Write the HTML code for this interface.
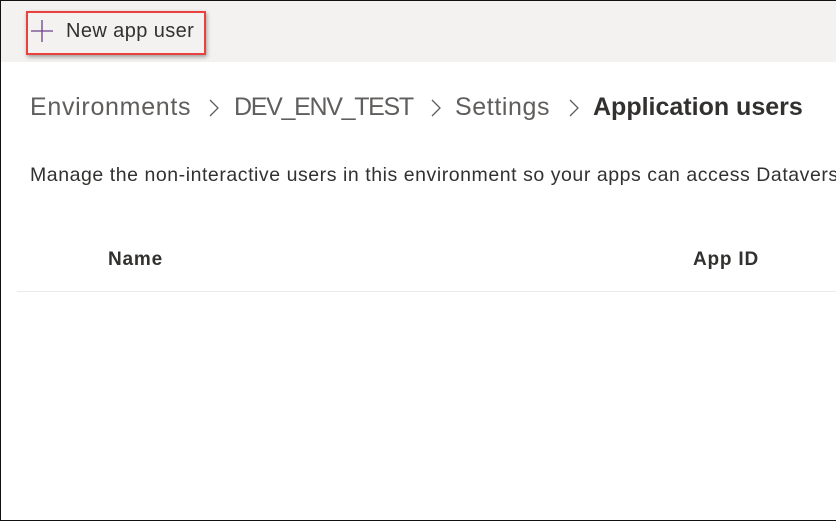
<!DOCTYPE html><html><head><style>
body{margin:0;width:836px;height:522px;overflow:hidden;background:#fff;font-family:"Liberation Sans",sans-serif;position:relative}
.frame{position:absolute;left:0;top:0;width:836px;height:521px;border:1px solid #111;border-right:none;box-sizing:border-box}
.bar{position:absolute;left:1px;top:1px;width:835px;height:61px;background:#f3f2f1}
.btn{position:absolute;left:26px;top:11px;width:180px;height:44px;border:2px solid #e8413f;box-shadow:1px 2px 4px rgba(0,0,0,.35);box-sizing:border-box}
.t{position:absolute;white-space:nowrap}
</style></head><body>
<div class="frame"></div>
<div class="bar"></div>
<div class="btn"></div>
<svg class="t" style="left:30px;top:19px" width="24" height="24"><path d="M1 12H23M12 1V23" stroke="#6b3f8a" stroke-width="1.3"/></svg>
<div class="t" style="left:66px;top:20px;font-size:20px;letter-spacing:0.4px;color:#323130">New app user</div>
<div class="t" style="left:30px;top:93px;font-size:25px;letter-spacing:0.7px;color:#605e5c">Environments</div>
<svg class="t" style="left:208px;top:98px" width="12" height="20"><path d="M2 2L10 10L2 18" fill="none" stroke="#605e5c" stroke-width="1.3"/></svg>
<div class="t" style="left:234px;top:93px;font-size:25px;letter-spacing:-1.3px;color:#605e5c">DEV_ENV_TEST</div>
<svg class="t" style="left:430px;top:98px" width="12" height="20"><path d="M2 2L10 10L2 18" fill="none" stroke="#605e5c" stroke-width="1.3"/></svg>
<div class="t" style="left:455px;top:93px;font-size:25px;letter-spacing:0.6px;color:#605e5c">Settings</div>
<svg class="t" style="left:568px;top:98px" width="12" height="20"><path d="M2 2L10 10L2 18" fill="none" stroke="#605e5c" stroke-width="1.3"/></svg>
<div class="t" style="left:593px;top:93px;font-size:25px;font-weight:bold;color:#323130">Application users</div>
<div class="t" style="left:30px;top:164px;font-size:19.5px;letter-spacing:0.55px;color:#323130">Manage the non-interactive users in this environment so your apps can access Dataverse</div>
<div class="t" style="left:108px;top:249px;font-size:19px;font-weight:bold;letter-spacing:0.8px;color:#323130">Name</div>
<div class="t" style="left:693px;top:249px;font-size:19px;font-weight:bold;letter-spacing:0.8px;color:#323130">App ID</div>
<div class="t" style="left:17px;top:291px;width:819px;height:1px;background:#edebe9"></div>
</body></html>
